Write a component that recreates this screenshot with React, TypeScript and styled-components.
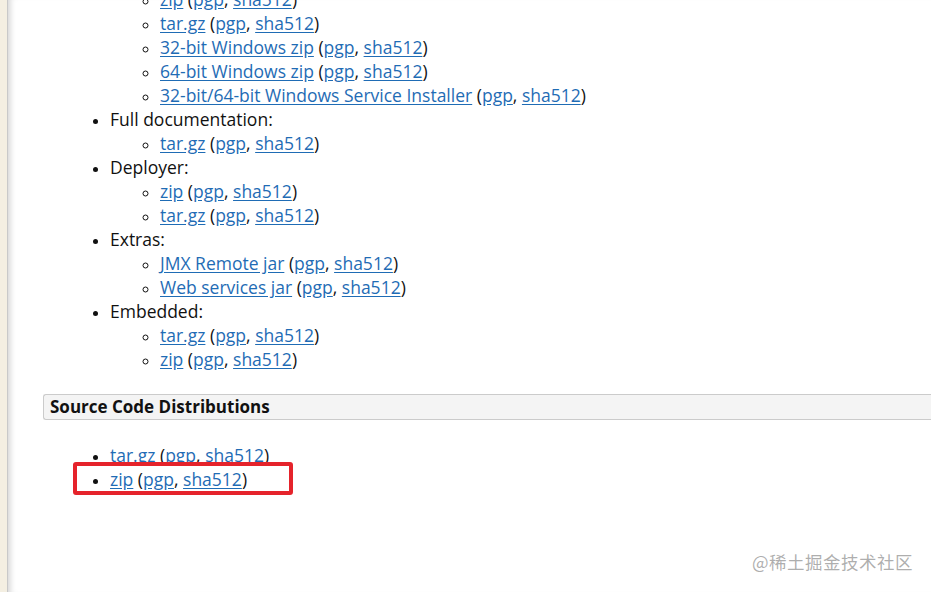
import * as React from 'react'
import styled, { createGlobalStyle } from 'styled-components'

const GlobalStyle = createGlobalStyle`
  html, body {
    margin: 0;
    padding: 0;
    background: #fff;
    overflow: hidden;
  }
  body {
    font-family: 'Open Sans', 'Liberation Sans', sans-serif;
    color: #111;
  }
`

const Page = styled.div`
  display: flex;
  width: 931px;
  height: 592px;
  overflow: hidden;
  position: relative;
`

const Rail = styled.div`
  flex: 0 0 7px;
  background: #f4efe2;
  border-right: 1px solid #c9c9c9;
`

const Main = styled.div`
  flex: 1;
  min-width: 0;
  box-shadow: inset 7px 0 6px -5px rgba(0, 0, 0, 0.18);
  padding-left: 35px;
`

const Scroll = styled.div`
  margin-top: -13px;
`

const List = styled.ul<{ $nested?: boolean }>`
  margin: 0;
  padding-left: ${(p) => (p.$nested ? '50px' : '67px')};
  list-style: ${(p) => (p.$nested ? 'circle' : 'disc')};
  font-size: 17.5px;
  line-height: 24px;
`

const Item = styled.li`
  position: relative;
  &::marker {
    font-size: 15px;
  }
`

const Link = styled.a`
  color: #1f6cb5;
  text-decoration: underline;
  text-underline-offset: 2px;
`

const Heading = styled.h3`
  margin: 23px 0 23px 0;
  padding: 0 6px;
  height: 24px;
  line-height: 24px;
  font-size: 17px;
  font-weight: 700;
  color: #111;
  background: #f4f4f4;
  border: 1px solid #cbcbcb;
  border-right: none;
  border-radius: 3px 0 0 3px;
`

const Highlight = styled.span`
  position: absolute;
  left: -37px;
  top: -5px;
  width: 212px;
  height: 25px;
  border: 4px solid #e5232b;
  border-radius: 3px;
  pointer-events: none;
`

const Watermark = styled.div`
  position: absolute;
  right: 18px;
  bottom: 18px;
  font-family: 'Noto Sans CJK SC', 'Noto Sans', sans-serif;
  font-size: 17.5px;
  color: rgba(120, 120, 120, 0.6);
  letter-spacing: 0.5px;
`

function Download({ label }: { label: string }) {
  return (
    <>
      <Link href="#">{label}</Link> (<Link href="#">pgp</Link>, <Link href="#">sha512</Link>)
    </>
  )
}

const groups: { title: string; items: string[] }[] = [
  {
    title: '',
    items: ['zip', 'tar.gz', '32-bit Windows zip', '64-bit Windows zip', '32-bit/64-bit Windows Service Installer'],
  },
  { title: 'Full documentation:', items: ['tar.gz'] },
  { title: 'Deployer:', items: ['zip', 'tar.gz'] },
  { title: 'Extras:', items: ['JMX Remote jar', 'Web services jar'] },
  { title: 'Embedded:', items: ['tar.gz', 'zip'] },
]

export default function App() {
  return (
    <Page>
      <GlobalStyle />
      <Rail />
      <Main>
        <Scroll>
          <List>
            {groups.map((g, i) =>
              g.title ? (
                <Item key={i}>
                  {g.title}
                  <List $nested>
                    {g.items.map((it, j) => (
                      <Item key={j}>
                        <Download label={it} />
                      </Item>
                    ))}
                  </List>
                </Item>
              ) : (
                <List $nested key={i}>
                  {g.items.map((it, j) => (
                    <Item key={j}>
                      <Download label={it} />
                    </Item>
                  ))}
                </List>
              )
            )}
          </List>
          <Heading>Source Code Distributions</Heading>
          <List>
            <Item>
              <Download label="tar.gz" />
            </Item>
            <Item>
              <Highlight />
              <Download label="zip" />
            </Item>
          </List>
        </Scroll>
      </Main>
      <Watermark>@稀土掘金技术社区</Watermark>
    </Page>
  )
}
